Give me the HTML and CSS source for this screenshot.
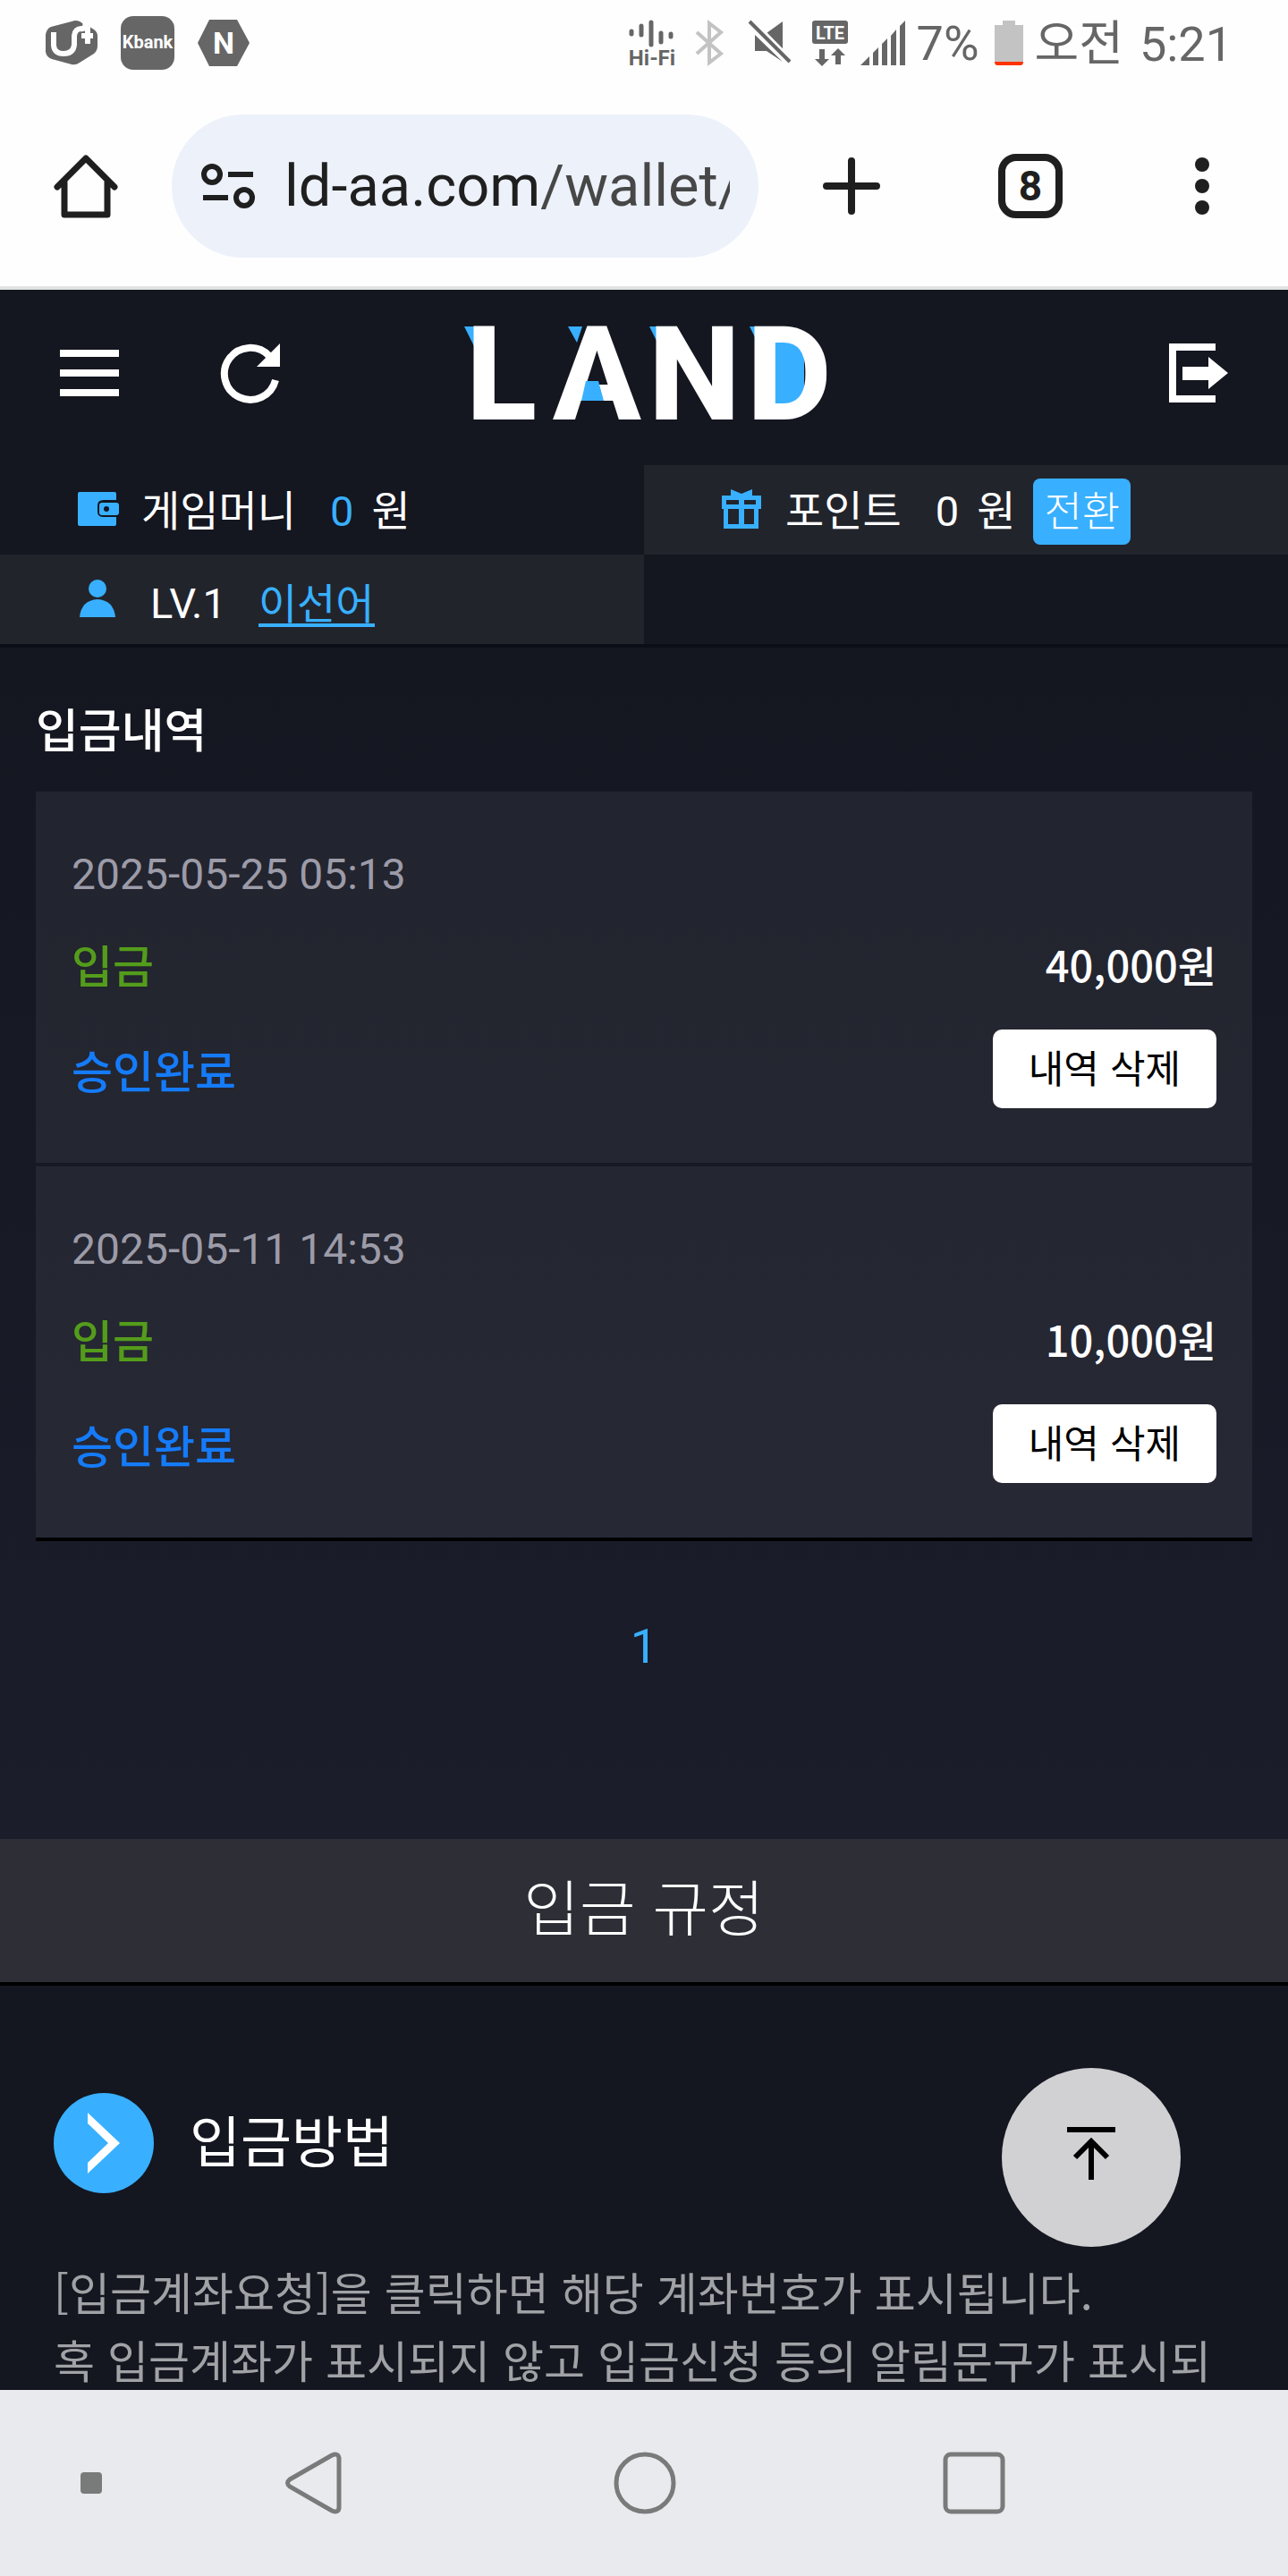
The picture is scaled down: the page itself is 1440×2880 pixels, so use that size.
FILE: index.html
```html
<!DOCTYPE html>
<html lang="ko">
<head>
<meta charset="UTF-8">
<meta name="viewport" content="width=device-width, initial-scale=1">
<title>입금내역</title>
<link rel="stylesheet" href="styles.css">
</head>
<body>

<!-- 상태바 -->
<div class="status-bar">
	<div class="status-apps">
		<svg width="60" height="60" viewBox="0 0 60 60">
			<path d="M7 12Q2 14 1 21V40Q2 46 8 48L30 54Q35 55 39 52L55 42Q59 39 59 33V22Q59 18 55 15L47 10L45 15Q44 8 39 6Q35 4 30 6Z" fill="#666"/>
			<path d="M10 18V33Q11 42 21 42Q32 42 33 32V22Q34 14 41 14Q46 15 45 9M41 22H54M48 11V31" fill="none" stroke="#fff" stroke-width="6"/>
		</svg>
		<svg width="60" height="60" viewBox="0 0 60 60">
			<rect width="60" height="60" rx="14" fill="#666"/>
			<text class="icon-text kbank" x="30" y="36" text-anchor="middle">Kbank</text>
		</svg>
		<svg width="60" height="60" viewBox="0 0 60 60">
			<path d="M14 4H45L59 30L45 56H14L1 30Z" fill="#666"/>
			<text class="icon-text naver" x="30" y="42" text-anchor="middle">N</text>
		</svg>
	</div>
	<div class="status-info">
		<svg width="52" height="52" viewBox="0 0 52 52">
			<path d="M3 13V16M14 7V17M25 3V28M36 15V25M47 16V19" stroke="#666" stroke-width="5" stroke-linecap="round"/>
			<text class="icon-text hifi" x="26" y="51" text-anchor="middle">Hi-Fi</text>
		</svg>
		<svg class="bluetooth" width="32" height="52" viewBox="0 0 32 52">
			<path d="M2 14L29 38L16 48V4L29 14L2 38" fill="none" stroke="#c3c3c3" stroke-width="4"/>
		</svg>
		<svg class="mute" width="48" height="52" viewBox="0 0 48 52">
			<path d="M20 15L38 2V40ZM7 17L38 47L20 35H7Z" fill="#666"/>
			<path d="M1 1L46 47" stroke="#fff" stroke-width="9"/>
			<path d="M1 2L46 47" stroke="#666" stroke-width="4"/>
		</svg>
		<svg class="lte" width="42" height="52" viewBox="0 0 42 52">
			<rect x="1" y="1" width="40" height="26" rx="3" fill="#666"/>
			<text class="icon-text lte-text" x="21" y="22" text-anchor="middle">LTE</text>
			<path d="M9 33H15V44H20L12 52L4 44H9ZM27 50V40H22L30 32L38 40H33V50Z" fill="#666"/>
		</svg>
		<svg class="signal" width="52" height="52" viewBox="0 0 52 52">
			<path d="M1 51L11 41V51ZM15 37L21 31V51H15ZM25 27L31 21V51H25ZM35 18L41 11V51H35ZM45 7L51 1V51H45Z" fill="#666"/>
		</svg>
		<span>7%</span>
		<svg class="battery" width="34" height="52" viewBox="0 0 34 52">
			<path d="M10 1H24V6H33V47H1V6H10Z" fill="#c3c3c3"/>
			<path d="M1 47H33Q33 51 30 51H4Q1 51 1 47Z" fill="#ff3300"/>
		</svg>
		<span class="clock"><span>오전</span> <time>5:21</time></span>
	</div>
</div>

<!-- 브라우저 주소창 -->
<div class="browser-bar">
	<button class="icon-btn home-btn" aria-label="홈">
		<svg width="72" height="72" viewBox="0 0 72 72">
			<path d="M4 37L36 5L68 37M12 31V68H60V31" fill="none" stroke="#1f1f1f" stroke-width="7" stroke-linecap="round" stroke-linejoin="round"/>
		</svg>
	</button>
	<div class="address">
		<svg width="62" height="52" viewBox="0 0 62 52">
			<g fill="none" stroke="#1f1f1f" stroke-width="6">
				<circle cx="13" cy="13" r="9"/>
				<circle cx="49" cy="39" r="9"/>
				<path d="M31 13H59M3 39H31"/>
			</g>
		</svg>
		<input class="url" type="text" aria-label="주소" value="ld-aa.com/wallet/">
	</div>
	<button class="icon-btn" aria-label="새 탭">
		<svg width="64" height="64" viewBox="0 0 64 64">
			<path d="M4 32H60M32 4V60" stroke="#1f1f1f" stroke-width="8" stroke-linecap="round"/>
		</svg>
	</button>
	<button class="icon-btn tabs-btn" aria-label="탭 목록">8</button>
	<button class="icon-btn more-btn" aria-label="더보기">
		<svg width="16" height="64" viewBox="0 0 16 64">
			<g fill="#1f1f1f"><circle cx="8" cy="8" r="8"/><circle cx="8" cy="32" r="8"/><circle cx="8" cy="56" r="8"/></g>
		</svg>
	</button>
</div>

<!-- 사이트 -->
<div class="site">
	<header class="header">
		<div class="header-left">
			<button class="icon-btn" aria-label="메뉴">
				<svg width="66" height="66" viewBox="0 0 66 66">
					<path d="M0 11H66M0 33H66M0 55H66" stroke="#fff" stroke-width="8"/>
				</svg>
			</button>
			<button class="icon-btn" aria-label="새로고침">
				<svg width="66" height="66" viewBox="0 0 66 66">
					<path d="M61 41A29 29 0 1 1 54 14" fill="none" stroke="#fff" stroke-width="8"/>
					<path d="M66 0V26H40Z" fill="#fff"/>
				</svg>
			</button>
		</div>
		<a class="logo" href="#" aria-label="LAND">
			<svg width="402" height="104" viewBox="0 0 402 104">
				<g fill="#38b0ff">
					<path d="M0 0H12V24ZM116 0H132L126 18ZM207 0H219V24ZM319 0H331V24Z"/>
					<rect x="346" y="16" width="34" height="72"/>
				</g>
				<g class="logo-text">
					<text y="104"><tspan x="2">L</tspan><tspan x="99">A</tspan><tspan x="206">N</tspan><tspan x="316">D</tspan></text>
				</g>
				<path d="M136 61H150L156 83H131Z" fill="#38b0ff"/>
			</svg>
		</a>
		<button class="icon-btn logout-btn" aria-label="로그아웃">
			<svg width="66" height="66" viewBox="0 0 66 66">
				<path d="M52 4H4V62H52" fill="none" stroke="#fff" stroke-width="8"/>
				<path d="M15 26H44V15L66 33L44 51V41H15Z" fill="#fff"/>
			</svg>
		</button>
	</header>

	<div class="member-info">
		<div class="info-cell">
			<svg width="48" height="46" viewBox="0 0 48 46">
				<path d="M3 3H42Q44 3 44 5V12H30Q23 12 23 18V25Q23 31 30 31H44V39Q44 41 42 41H3Q1 41 1 39V5Q1 3 3 3Z" fill="#38b0ff"/>
				<rect x="25" y="15" width="22" height="14" rx="3" fill="#38b0ff"/>
				<circle cx="33" cy="22" r="3" fill="#141620"/>
			</svg>
			<span class="info-name">게임머니</span>
			<span class="info-value blue">0</span>
			<span>원</span>
		</div>
		<div class="info-cell light">
			<svg width="48" height="46" viewBox="0 0 48 46">
				<path d="M11 0L23 5L35 0V7H45V22H42V44H3V22H1V7H11ZM6 12V17H20V12ZM26 12V17H39V12ZM8 22V39H20V22ZM26 22V39H37V22Z" fill="#38b0ff" fill-rule="evenodd"/>
			</svg>
			<span class="info-name">포인트</span>
			<span class="info-value">0</span>
			<span>원</span>
			<button class="change-btn">전환</button>
		</div>
		<div class="info-cell light">
			<svg width="48" height="46" viewBox="0 0 48 46">
				<circle cx="23" cy="11" r="10" fill="#38b0ff"/>
				<path d="M3 43Q5 24 23 23Q41 24 43 43Z" fill="#38b0ff"/>
			</svg>
			<span class="level">LV.1</span>
			<a class="user-name" href="#">이선어</a>
		</div>
	</div>

	<main>
		<section class="history">
			<h1>입금내역</h1>
			<ul class="history-list">
				<li class="history-item">
					<time class="date">2025-05-25 05:13</time>
					<div class="row">
						<span class="type">입금</span>
						<span class="amount">40,000원</span>
					</div>
					<div class="row">
						<span class="state">승인완료</span>
						<button class="delete-btn">내역 삭제</button>
					</div>
				</li>
				<li class="history-item">
					<time class="date">2025-05-11 14:53</time>
					<div class="row">
						<span class="type">입금</span>
						<span class="amount">10,000원</span>
					</div>
					<div class="row">
						<span class="state">승인완료</span>
						<button class="delete-btn">내역 삭제</button>
					</div>
				</li>
			</ul>
			<nav class="pagination"><a href="#">1</a></nav>
		</section>

		<h2 class="rule-title">입금 규정</h2>
		<section class="rule">
			<h3>
				<svg width="112" height="112" viewBox="0 0 112 112">
					<circle cx="56" cy="56" r="56" fill="#38b0ff"/>
					<path d="M38 22L74 56L38 90V78L61 56L38 34Z" fill="#fff"/>
				</svg>
				<span>입금방법</span>
			</h3>
			<p>[입금계좌요청]을 클릭하면 해당 계좌번호가 표시됩니다.<br>혹 입금계좌가 표시되지 않고 입금신청 등의 알림문구가 표시되</p>
		</section>
	</main>

	<button class="top-btn" aria-label="맨 위로">
		<svg width="54" height="60" viewBox="0 0 54 60">
			<path d="M0 3H54" stroke="#000" stroke-width="6"/>
			<path d="M27 59V17M9 34L27 16L45 34" fill="none" stroke="#000" stroke-width="6"/>
		</svg>
	</button>
</div>

<!-- 하단 내비게이션 -->
<div class="nav-bar">
	<span class="nav-dot"></span>
	<button class="icon-btn" aria-label="뒤로">
		<svg width="68" height="68" viewBox="0 0 68 68">
			<path d="M6 30L53 3Q60 0 61 6V62Q60 68 53 65L6 38Q1 34 6 30Z" fill="none" stroke="#797b7a" stroke-width="5"/>
		</svg>
	</button>
	<button class="icon-btn" aria-label="홈 화면">
		<svg width="68" height="68" viewBox="0 0 68 68">
			<circle cx="34" cy="34" r="32" fill="none" stroke="#797b7a" stroke-width="5"/>
		</svg>
	</button>
	<button class="icon-btn" aria-label="최근 앱">
		<svg width="68" height="68" viewBox="0 0 68 68">
			<rect x="2" y="2" width="64" height="64" rx="6" fill="none" stroke="#797b7a" stroke-width="5"/>
		</svg>
	</button>
</div>

</body>
</html>
```

FILE: styles.css
```css
* {
  padding: 0;
  margin: 0;
  box-sizing: border-box;
}

body {
  height: 100vh;
  display: flex;
  flex-direction: column;
  background: #141620;
  color: #fff;
  font-family: "Noto Sans CJK KR", sans-serif;
  font-size: 47px;
  overflow: hidden;
}

svg {
  display: block;
  flex: none;
  overflow: visible;
}

button {
  border: 0;
  background: none;
  color: inherit;
  font-family: inherit;
}

a {
  color: inherit;
  text-decoration: none;
}

.icon-btn {
  display: flex;
  align-items: center;
  justify-content: center;
}

/* 상태바 */
.status-bar {
  flex: none;
  height: 96px;
  padding: 0 62px 0 50px;
  display: flex;
  align-items: center;
  justify-content: space-between;
  background: #fefefe;
  color: #666;
  font-family: Roboto, "Noto Sans CJK KR", sans-serif;
  font-size: 54px;
}

.status-apps {
  display: flex;
  gap: 25px;
}

.status-info {
  display: flex;
  align-items: center;
}

.clock {
  display: flex;
  align-items: center;
  gap: 18px;
  padding-top: 4px;
  line-height: 64px;
}

.icon-text {
  font-family: Roboto, sans-serif;
  font-weight: 700;
  fill: #fff;
}

.kbank {
  font-size: 20px;
}

.naver {
  font-size: 34px;
}

.hifi {
  font-size: 24px;
  fill: #666;
}

.lte-text {
  font-size: 20px;
}

.bluetooth {
  margin-left: 22px;
}

.mute {
  margin-left: 28px;
}

.lte {
  margin-left: 22px;
}

.signal {
  margin: 0 12px;
}

.battery {
  margin: 0 12px 0 16px;
}

/* 주소창 */
.browser-bar {
  flex: none;
  height: 228px;
  padding: 0 88px 0 60px;
  display: flex;
  align-items: center;
  justify-content: space-between;
  background: #fefefe;
  border-bottom: 4px solid #e1e3e1;
}

.address {
  width: 656px;
  height: 160px;
  margin: 0 12px 0 0;
  padding: 0 32px;
  display: flex;
  align-items: center;
  gap: 32px;
  border-radius: 80px;
  background: #ecf1fa;
}

.url {
  flex: 1;
  min-width: 0;
  border: 0;
  font-family: Roboto, sans-serif;
  font-size: 65px;
  line-height: 80px;
  color: transparent;
  background: linear-gradient(90deg, #1f1f1f 285px, #474747 285px);
  -webkit-background-clip: text;
  background-clip: text;
}

.tabs-btn {
  width: 72px;
  height: 72px;
  margin-left: 72px;
  margin-right: 88px;
  border: 8px solid #1f1f1f;
  border-radius: 20px;
  color: #1f1f1f;
  font-family: Roboto, sans-serif;
  font-size: 46px;
  font-weight: 700;
}

.more-btn {
  width: 16px;
}

/* 사이트 */
.site {
  flex: 1;
  min-height: 0;
  position: relative;
  overflow: hidden;
}

.header {
  height: 196px;
  padding: 0 67px 10px;
  display: grid;
  grid-template-columns: 1fr auto 1fr;
  align-items: center;
}

.header-left {
  display: flex;
  gap: 114px;
}

.logout-btn {
  justify-self: end;
}

.logo-text {
  font-family: Roboto, sans-serif;
  font-size: 146px;
  font-weight: 800;
  fill: #fff;
}

.member-info {
  display: grid;
  grid-template-columns: 1fr 1fr;
  border-bottom: 4px solid #0b0d17;
  font-family: Roboto, "Noto Sans CJK KR", sans-serif;
}

.info-cell {
  height: 100px;
  padding: 0 86px;
  display: flex;
  align-items: center;
  line-height: 62px;
}

.info-cell span {
  padding-top: 4px;
}

.light {
  background: #22242c;
}

.info-name {
  margin-left: 24px;
}

.info-value {
  margin: 0 20px 0 38px;
}

.blue {
  color: #38b0ff;
}

.change-btn {
  height: 74px;
  margin-top: 4px;
  margin-left: 20px;
  padding: 0 12px;
  border-radius: 8px;
  background: #38b0ff;
  font-size: 46px;
  font-weight: 300;
  line-height: 74px;
}

.info-cell .level {
  margin-left: 34px;
  padding-top: 10px;
}

.user-name {
  margin-left: 36px;
  padding-top: 16px;
  color: #38b0ff;
  line-height: 42px;
  border-bottom: 4px solid #38b0ff;
}

/* 입금내역 */
.history {
  height: 1332px;
  padding: 50px 40px 0;
  background: linear-gradient(#141620, #1b1d2b);
}

h1 {
  margin-bottom: 31px;
  font-size: 52px;
  font-weight: 500;
  line-height: 80px;
}

.history-list {
  list-style: none;
  border-bottom: 4px solid #000;
}

.history-item {
  height: 415px;
  padding: 54px 40px 0;
  background: rgba(255, 255, 255, .06);
}

.history-item + .history-item {
  margin-top: 4px;
}

.date {
  display: block;
  color: #9c9ba8;
  font-family: Roboto, sans-serif;
  font-size: 48px;
  line-height: 78px;
}

.row {
  height: 88px;
  margin-top: 16px;
  display: flex;
  align-items: center;
  justify-content: space-between;
  font-size: 50px;
  font-weight: 500;
}

.row + .row {
  margin-top: 30px;
}

.type {
  color: #549c1b;
}

.amount {
  font-size: 47px;
}

.state {
  color: #157bf8;
}

.delete-btn {
  height: 88px;
  padding: 0 40px 6px;
  border-radius: 10px;
  background: #fff;
  color: #000;
  font-size: 43px;
}

.pagination {
  padding-top: 78px;
  text-align: center;
  color: #38b0ff;
  font-family: Roboto, sans-serif;
  font-size: 54px;
  line-height: 80px;
}

/* 입금 규정 */
.rule-title {
  height: 164px;
  border-bottom: 4px solid #000;
  background: #2e2e36;
  font-size: 68px;
  font-weight: 300;
  line-height: 148px;
  text-align: center;
}

.rule {
  padding: 120px 60px 0;
}

.rule h3 {
  display: flex;
  align-items: center;
  gap: 40px;
  font-size: 62px;
  font-weight: 400;
  line-height: 102px;
}

.rule h3 span {
  padding-bottom: 10px;
}

.rule p {
  margin-top: 71px;
  color: #a1a2a6;
  font-size: 50px;
  line-height: 76px;
  white-space: nowrap;
}

.top-btn {
  position: absolute;
  right: 120px;
  bottom: 160px;
  width: 200px;
  height: 200px;
  display: flex;
  align-items: center;
  justify-content: center;
  padding-bottom: 8px;
  border-radius: 50%;
  background: #d1d1d3;
}

/* 하단바 */
.nav-bar {
  flex: none;
  height: 208px;
  padding: 0 317px 0 90px;
  display: flex;
  align-items: center;
  justify-content: space-between;
  background: #e9eaee;
}

.nav-dot {
  width: 24px;
  height: 24px;
  margin-right: -96px;
  border-radius: 4px;
  background: #797b7a;
}
```
